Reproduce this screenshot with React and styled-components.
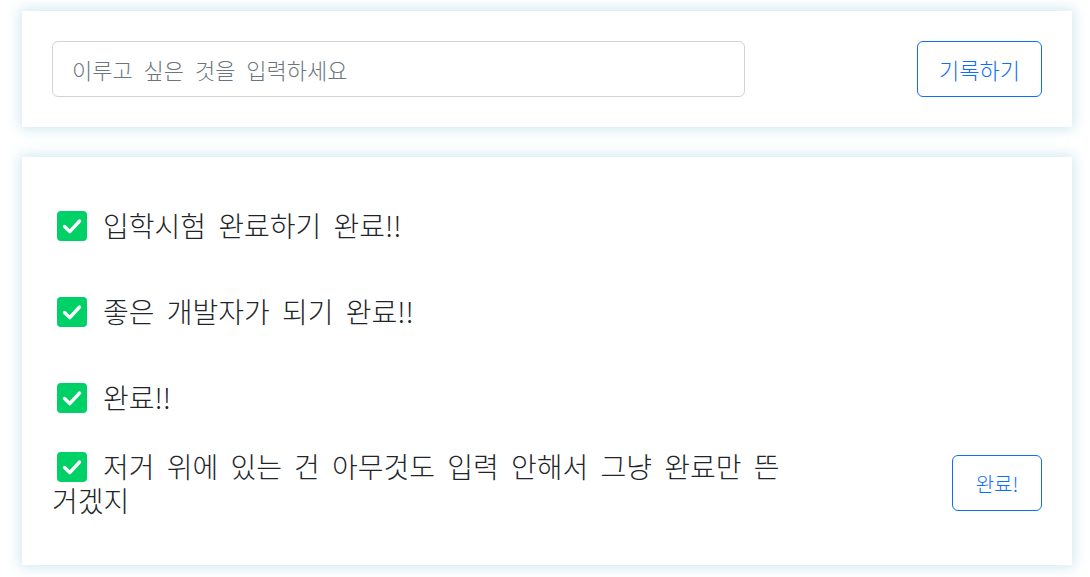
import styled, { createGlobalStyle } from 'styled-components'

const GlobalStyle = createGlobalStyle`
    body {
        margin: 0;
        background: #ffffff;
        font-family: "Noto Sans CJK KR", "Noto Sans", sans-serif;
        color: #212529;
    }
`

const todos = [
    { text: '입학시험 완료하기 완료!!', done: false },
    { text: '좋은 개발자가 되기 완료!!', done: false },
    { text: '완료!!', done: false },
    { text: '저거 위에 있는 건 아무것도 입력 안해서 그냥 완료만 뜬 거겠지', done: true },
]

function CheckMark() {
    return (
        <Check width="30" height="30" viewBox="0 0 30 30">
            <rect x="0" y="0" width="30" height="30" rx="4" fill="#00d166" />
            <path d="M7.5 15.5 L12.8 20.6 L22.5 10" fill="none" stroke="#ffffff" strokeWidth="3.4" strokeLinecap="round" strokeLinejoin="round" />
        </Check>
    )
}

export default function App() {
    return (
        <Page>
            <GlobalStyle />
            <Card>
                <FormRow>
                    <Input placeholder="이루고 싶은 것을 입력하세요" />
                    <OutlineButton>기록하기</OutlineButton>
                </FormRow>
            </Card>
            <ListCard>
                {todos.map((el, i) =>
                    <TodoRow key={i}>
                        <TodoText>
                            <CheckMark />{el.text}
                        </TodoText>
                        {el.done ? <OutlineButton small>완료!</OutlineButton> : ''}
                    </TodoRow>
                )}
            </ListCard>
        </Page>
    )
}

const Page = styled.div`
    padding: 11px 18px 12px 22px;
    display: flex;
    flex-direction: column;
    gap: 30px;
`

const Card = styled.div`
    background: #ffffff;
    box-shadow: 0 0 12px 2px rgba(150, 205, 225, 0.45);
    padding: 30px;
`

const FormRow = styled.div`
    display: flex;
    justify-content: space-between;
    align-items: center;
`

const Input = styled.input`
    width: 693px;
    height: 56px;
    box-sizing: border-box;
    border: 1px solid #ced4da;
    border-radius: 6px;
    padding: 0 19px;
    font-family: inherit;
    font-size: 22px;
    font-weight: 300;
    word-spacing: 6px;
    color: #212529;
    outline: none;

    &::placeholder {
        color: #6c757d;
    }
`

const OutlineButton = styled.button`
    width: ${props => props.small ? '90px' : '125px'};
    height: 56px;
    padding: 0;
    box-sizing: border-box;
    background: #ffffff;
    border: 1px solid #0d6efd;
    border-radius: 6px;
    color: #0d6efd;
    font-family: inherit;
    font-size: ${props => props.small ? '20px' : '22px'};
    font-weight: 300;
    flex-shrink: 0;
    cursor: pointer;
`

const ListCard = styled(Card)`
    padding: 25px 30px 39px;
`

const TodoRow = styled.div`
    height: 86px;
    display: flex;
    justify-content: space-between;
    align-items: center;
`

const TodoText = styled.div`
    width: 760px;
    font-size: 28px;
    font-weight: 300;
    line-height: 34px;
    word-spacing: 6px;
    word-break: keep-all;
`

const Check = styled.svg`
    vertical-align: -4px;
    margin: 0 16px 0 5px;
`
